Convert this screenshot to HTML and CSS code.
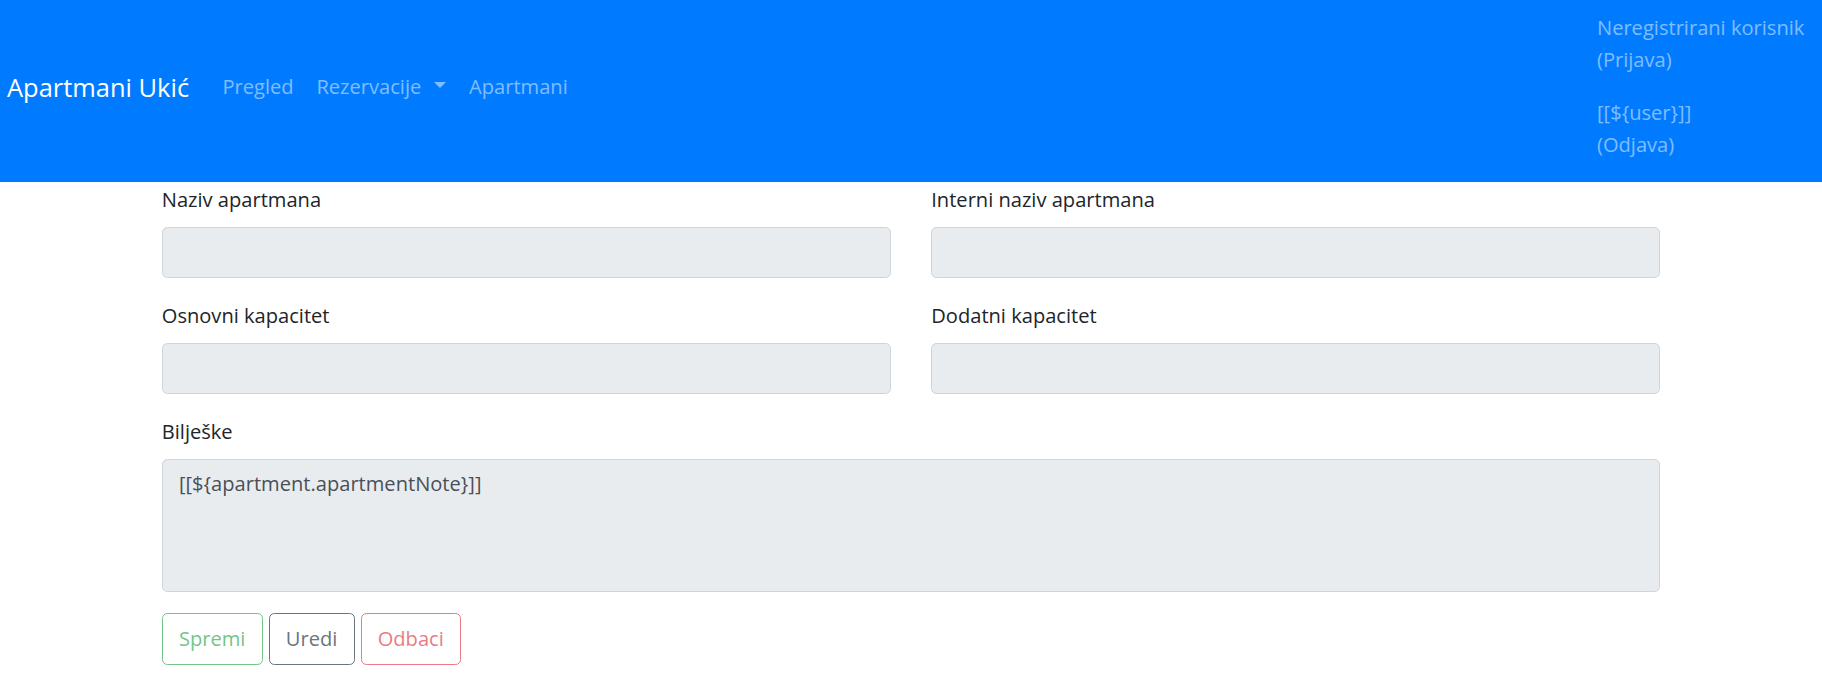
FILE: index.html
```html
<!DOCTYPE html>
<html lang="hr">
<head>
<meta charset="utf-8">
<title>Apartmani Ukić</title>
<link rel="stylesheet" href="styles.css">
</head>
<body>
<nav class="navbar">
  <a class="brand" href="#">Apartmani Ukić</a>
  <ul class="nav">
    <li><a class="nav-link" href="#">Pregled</a></li>
    <li><a class="nav-link dropdown-toggle" href="#">Rezervacije</a></li>
    <li><a class="nav-link" href="#">Apartmani</a></li>
  </ul>
  <ul class="nav nav-right">
    <li><a class="user-link" href="#">Neregistrirani korisnik<br>(Prijava)</a></li>
    <li><a class="user-link" href="#">[[${user}]]<br>(Odjava)</a></li>
  </ul>
</nav>
<main class="container">
  <form class="form">
    <div class="row">
      <div class="form-group">
        <label class="label">Naziv apartmana</label>
        <input class="control" type="text" readonly>
      </div>
      <div class="form-group">
        <label class="label">Interni naziv apartmana</label>
        <input class="control" type="text" readonly>
      </div>
    </div>
    <div class="row">
      <div class="form-group">
        <label class="label">Osnovni kapacitet</label>
        <input class="control" type="text" readonly>
      </div>
      <div class="form-group">
        <label class="label">Dodatni kapacitet</label>
        <input class="control" type="text" readonly>
      </div>
    </div>
    <div class="form-group">
      <label class="label">Bilješke</label>
      <textarea class="control notes" readonly>[[${apartment.apartmentNote}]]</textarea>
    </div>
    <div class="actions">
      <button type="button" class="btn btn-success" disabled>Spremi</button>
      <button type="button" class="btn btn-secondary">Uredi</button>
      <button type="button" class="btn btn-danger" disabled>Odbaci</button>
    </div>
  </form>
</main>
</body>
</html>
```

FILE: styles.css
```css
* { box-sizing: border-box; }
html, body { margin: 0; padding: 0; }
body {
  font-family: "Open Sans", "Noto Sans", sans-serif;
  font-size: 20.1px;
  line-height: 32.4px;
  color: #212529;
  background: #fff;
}
a { text-decoration: none; }
ul { list-style: none; margin: 0; padding: 0; }

/* ---------- navbar ---------- */
.navbar {
  display: flex;
  align-items: center;
  height: 182px;
  padding: 0 0 8.4px 7px;
  background: #007bff;
}
.brand {
  color: #fff;
  font-size: 25.45px;
  line-height: 40.5px;
  margin-right: 22px;
}
.nav { display: flex; align-items: center; }
.nav-link {
  display: block;
  padding: 0 11.4px;
  color: rgba(255, 255, 255, 0.5);
}
.dropdown-toggle::after {
  content: "";
  display: inline-block;
  margin-left: 13px;
  vertical-align: 5.5px;
  border-top: 6.5px solid;
  border-right: 6.5px solid transparent;
  border-left: 6.5px solid transparent;
}
.nav-right {
  margin-left: auto;
  width: 225px;
  flex-direction: column;
  align-items: flex-start;
  gap: 20px;
}
.user-link {
  display: block;
  color: rgba(255, 255, 255, 0.5);
}

/* ---------- form ---------- */
.container {
  max-width: 1498.5px;
  margin: 0 auto;
  padding-top: 1.5px;
}
.row {
  display: grid;
  grid-template-columns: 1fr 1fr;
  column-gap: 40.5px;
}
.form-group { margin-bottom: 21.6px; }
.label {
  display: block;
  margin-bottom: 10.8px;
}
.control {
  display: block;
  width: 100%;
  height: 51.3px;
  padding: 8.1px 16.2px;
  font: inherit;
  color: #495057;
  background: #e9ecef;
  border: 1.35px solid #ced4da;
  border-radius: 5.4px;
  outline: none;
}
.notes {
  height: 133px;
  resize: none;
}
.actions { display: flex; gap: 6px; }
.btn {
  font: inherit;
  height: 51.3px;
  padding: 8.1px 16.2px;
  background: transparent;
  border: 1.35px solid;
  border-radius: 5.4px;
}
.btn-success { color: #28a745; border-color: #28a745; opacity: 0.65; }
.btn-secondary { color: #6c757d; border-color: #6c757d; }
.btn-danger { color: #dc3545; border-color: #dc3545; opacity: 0.65; }
```
